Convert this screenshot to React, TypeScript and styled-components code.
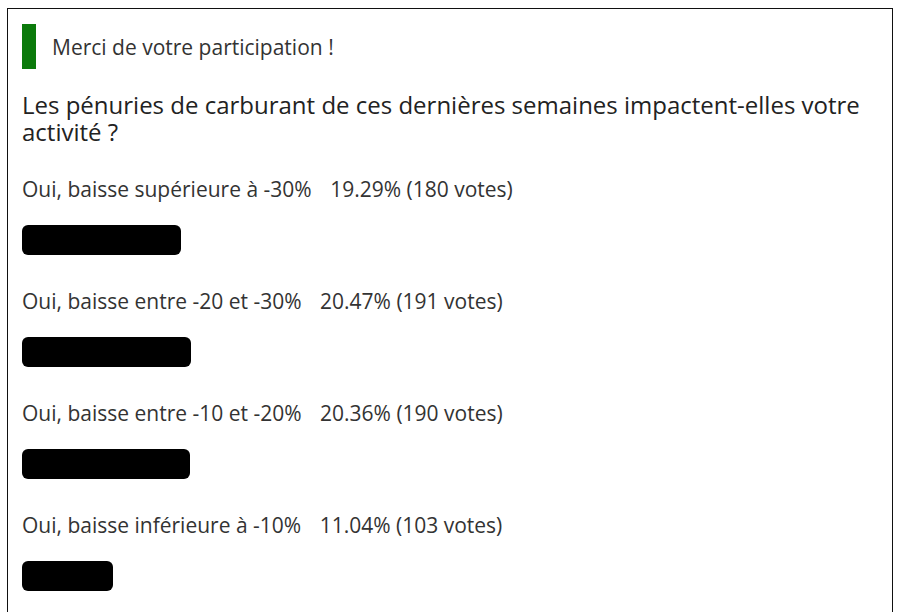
import styled, { createGlobalStyle } from "styled-components";

const GlobalStyle = createGlobalStyle`
  html, body {
    margin: 0;
    padding: 0;
    background: #ffffff;
  }
  body {
    font-family: "Open Sans", "Liberation Sans", sans-serif;
    color: #333333;
  }
`;

const Page = styled.div`
  padding: 8px 7px 0 7px;
  width: 900px;
  box-sizing: border-box;
`;

const Poll = styled.div`
  border: 1px solid #111111;
  border-bottom: none;
  width: 886px;
  height: 640px;
  box-sizing: border-box;
  padding: 15px 14px 0 14px;
`;

const Notice = styled.div`
  display: flex;
  align-items: center;
  height: 45px;
  border-left: 14px solid #0b7a0b;
  padding-left: 16px;
  font-size: 21px;
  color: #333333;
`;

const Question = styled.h2`
  margin: 22px 0 0 0;
  font-size: 24px;
  font-weight: 400;
  line-height: 27px;
  color: #222222;
`;

const Options = styled.div`
  display: flex;
  flex-direction: column;
  gap: 33px;
  margin-top: 31px;
`;

const Option = styled.div`
  display: flex;
  flex-direction: column;
  gap: 22px;
`;

const Label = styled.div`
  font-size: 21px;
  line-height: 27px;
  color: #333333;
  white-space: nowrap;
`;

const Result = styled.span`
  margin-left: 13px;
`;

const Bar = styled.div`
  height: 30px;
  background: #000000;
  border-radius: 6px;
`;

type Answer = { label: string; pct: number; votes: number };

const answers: Answer[] = [
  { label: "Oui, baisse supérieure à -30%", pct: 19.29, votes: 180 },
  { label: "Oui, baisse entre -20 et -30%", pct: 20.47, votes: 191 },
  { label: "Oui, baisse entre -10 et -20%", pct: 20.36, votes: 190 },
  { label: "Oui, baisse inférieure à -10%", pct: 11.04, votes: 103 },
];

export default function App() {
  return (
    <>
      <GlobalStyle />
      <Page>
        <Poll>
          <Notice>Merci de votre participation !</Notice>
          <Question>
            Les pénuries de carburant de ces dernières semaines impactent-elles
            votre activité ?
          </Question>
          <Options>
            {answers.map((a) => (
              <Option key={a.label}>
                <Label>
                  {a.label}{" "}
                  <Result>
                    {a.pct.toFixed(2)}% ({a.votes} votes)
                  </Result>
                </Label>
                <Bar style={{ width: `${Math.round(a.pct * 8.25)}px` }} />
              </Option>
            ))}
          </Options>
        </Poll>
      </Page>
    </>
  );
}
